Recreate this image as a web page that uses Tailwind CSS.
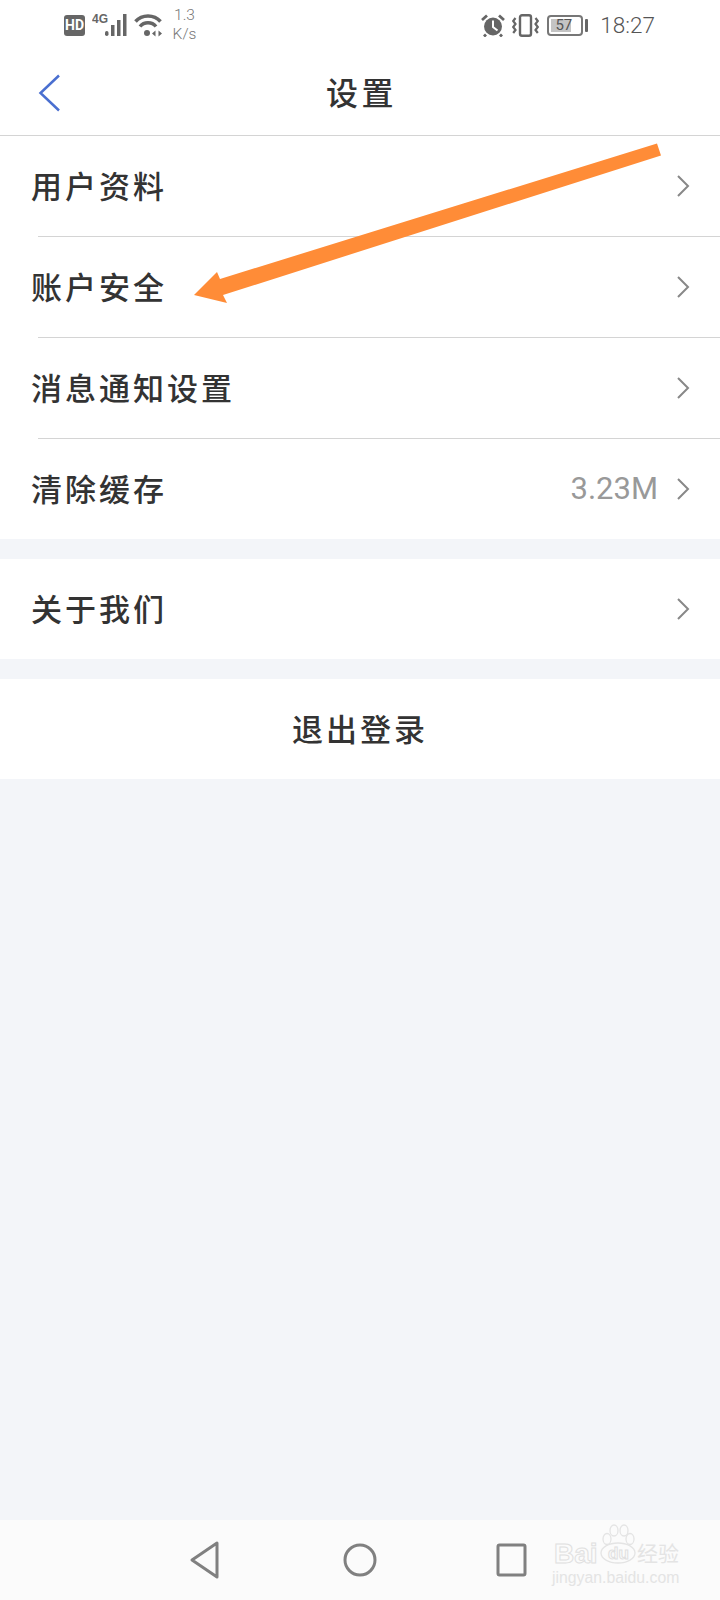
<!DOCTYPE html>
<html lang="zh">
<head>
    <meta charset="UTF-8">
    <meta name="viewport" content="width=device-width, initial-scale=1.0">
    <title>设置</title>
    <script src="https://cdn.jsdelivr.net/npm/@tailwindcss/browser@4"></script>
</head>
<body class="bg-[#f3f5f9] font-['Noto_Sans_CJK_SC',sans-serif]">
<div class="relative w-[720px] h-[1600px] flex flex-col overflow-hidden">

    <!-- Status bar -->
    <div class="h-[60px] bg-white flex items-center justify-between pb-[10px] pl-[64px] pr-[65px] text-[#666] font-['Roboto',sans-serif]">
        <div class="flex items-center">
            <div class="w-[21px] h-[21px] rounded-[3px] bg-[#666] text-white text-[14px] font-bold flex items-center justify-center">HD</div>
            <svg class="ml-[7px]" width="36" height="24" viewBox="0 0 36 24" fill="#666">
                <text x="0" y="10" font-size="12" font-weight="700" font-family="Liberation Sans">4G</text>
                <rect x="13" y="18" width="3.500" height="5" rx="1.700"/>
                <rect x="19" y="12" width="3.500" height="11"/>
                <rect x="25" y="7" width="3.500" height="16"/>
                <rect x="31" y="1" width="3.500" height="22"/>
            </svg>
            <svg class="ml-[6px]" width="28" height="24" viewBox="0 0 28 24" fill="none" stroke="#666" stroke-width="3.500">
                <path d="M1.500 8.500 C8 1 20 1 26.500 8.500"/>
                <path d="M6 13.500 C10 8.500 18 8.500 22 13.500"/>
                <circle cx="13" cy="20" r="3" fill="#666" stroke="none"/>
                <path d="M18 20.500 l3.500 -3 v6 z M28 20.500 l-3.500 -3 v6 z" fill="#666" stroke="none"/>
            </svg>
            <div class="ml-[10px] w-[25px] text-[15.500px] leading-[19px] text-center font-light text-[#777]">1.3<br>K/s</div>
        </div>
        <div class="flex items-center">
            <svg width="24" height="23" viewBox="0 0 24 23">
                <circle cx="12" cy="12.500" r="9" fill="#666"/>
                <path d="M12 6.500 V13 L16.500 16.500" fill="none" stroke="#fff" stroke-width="2"/>
                <path d="M1 6 L6 1.500 M23 6 L18 1.500 M5 20.500 L3 22.500 M19 20.500 L21 22.500" stroke="#666" stroke-width="2.800"/>
            </svg>
            <svg class="ml-[7px]" width="27" height="23" viewBox="0 0 27 23" fill="none" stroke="#666">
                <rect x="8" y="1.200" width="11" height="20.500" rx="2" stroke-width="2.400"/>
                <path d="M3.500 4 L1.200 7 L3.500 10 L1.200 13 L3.500 16 L1.200 19 M23.500 4 L25.800 7 L23.500 10 L25.800 13 L23.500 16 L25.800 19" stroke-width="2.200"/>
            </svg>
            <div class="ml-[8px] relative w-[36px] h-[21px] rounded-[4px] border-2 border-[#777] p-[2px] flex">
                <div class="w-[20px] bg-[#c4c4c4]"></div>
                <span class="absolute inset-0 text-[15px] leading-[17px] text-center text-[#555] pr-[3px]">57</span>
            </div>
            <div class="ml-[2px] w-[3px] h-[13px] rounded-[1px] bg-[#666]"></div>
            <div class="ml-[12px] text-[22.500px] leading-none font-light text-[#555]">18:27</div>
        </div>
    </div>

    <!-- Title bar -->
    <div class="relative h-[76px] bg-white border-b border-[#d4d4d4] flex items-center justify-center pb-[14px]">
        <svg class="absolute left-[38px] top-[14px]" width="24" height="38" viewBox="0 0 24 38" fill="none" stroke="#4a6fd0" stroke-width="2.500">
            <path d="M21 1.500 L2.500 19 L21 36.500"/>
        </svg>
        <h1 class="text-[32px] leading-none font-medium text-[#333] tracking-[3.500px] pl-[3px]">设置</h1>
    </div>

    <!-- Settings list -->
    <div class="bg-white">
        <div class="h-[100px] flex items-center justify-between pl-[31px] pr-[30px]">
            <span class="pb-[2px] text-[31px] font-medium text-[#333] tracking-[3px]">用户资料</span>
            <svg width="14" height="24" viewBox="0 0 14 24" fill="none" stroke="#888" stroke-width="2"><path d="M2 2 L12 12 L2 22"/></svg>
        </div>
        <div class="ml-[38px] h-px bg-[#d4d4d4]"></div>
        <div class="h-[100px] flex items-center justify-between pl-[31px] pr-[30px]">
            <span class="pb-[2px] text-[31px] font-medium text-[#333] tracking-[3px]">账户安全</span>
            <svg width="14" height="24" viewBox="0 0 14 24" fill="none" stroke="#888" stroke-width="2"><path d="M2 2 L12 12 L2 22"/></svg>
        </div>
        <div class="ml-[38px] h-px bg-[#d4d4d4]"></div>
        <div class="h-[100px] flex items-center justify-between pl-[31px] pr-[30px]">
            <span class="pb-[2px] text-[31px] font-medium text-[#333] tracking-[3px]">消息通知设置</span>
            <svg width="14" height="24" viewBox="0 0 14 24" fill="none" stroke="#888" stroke-width="2"><path d="M2 2 L12 12 L2 22"/></svg>
        </div>
        <div class="ml-[38px] h-px bg-[#d4d4d4]"></div>
        <div class="h-[100px] flex items-center justify-between pl-[31px] pr-[30px]">
            <span class="pb-[2px] text-[31px] font-medium text-[#333] tracking-[3px]">清除缓存</span>
            <div class="flex items-center">
                <span class="text-[31px] text-[#999] font-['Roboto',sans-serif] mr-[18px]">3.23M</span>
                <svg width="14" height="24" viewBox="0 0 14 24" fill="none" stroke="#888" stroke-width="2"><path d="M2 2 L12 12 L2 22"/></svg>
            </div>
        </div>
    </div>

    <div class="mt-[20px] h-[100px] bg-white flex items-center justify-between pl-[31px] pr-[30px]">
        <span class="pb-[2px] text-[31px] font-medium text-[#333] tracking-[3px]">关于我们</span>
        <svg width="14" height="24" viewBox="0 0 14 24" fill="none" stroke="#888" stroke-width="2"><path d="M2 2 L12 12 L2 22"/></svg>
    </div>

    <div class="mt-[20px] h-[100px] bg-white flex items-center justify-center">
        <span class="pb-[2px] text-[31px] font-medium text-[#333] tracking-[3px]">退出登录</span>
    </div>

    <div class="flex-1"></div>

    <!-- Android nav -->
    <div class="h-[80px] bg-[#fbfbfb] flex items-center pl-[190px]">
        <svg width="32" height="38" viewBox="0 0 32 38" fill="none" stroke="#808080" stroke-width="3" stroke-linejoin="round">
            <path d="M27 2 V36 L2 19 Z"/>
        </svg>
        <svg class="ml-[121px]" width="34" height="36" viewBox="0 0 34 36" fill="none" stroke="#808080" stroke-width="3">
            <circle cx="17" cy="18" r="15"/>
        </svg>
        <svg class="ml-[119px]" width="32" height="34" viewBox="0 0 32 34" fill="none" stroke="#808080" stroke-width="3" stroke-linejoin="round">
            <rect x="2" y="2" width="27" height="30" rx="1.500"/>
        </svg>
    </div>

    <!-- Annotation arrow -->
    <svg class="absolute left-0 top-0" width="720" height="320" viewBox="0 0 720 320">
        <polygon fill="#ff8c37" points="194,295 217,272 220,279 657,143.500 661,155.500 223,295 227,303"/>
    </svg>

    <!-- Baidu watermark -->
    <div class="absolute left-[552px] top-[1524px] w-[130px] h-[66px] text-[#e4e4e4] font-['Liberation_Sans',sans-serif]">
        <svg class="absolute left-[44px] top-0" width="44" height="42" viewBox="0 0 44 42" fill="none" stroke="#e4e4e4" stroke-width="1.300">
            <ellipse cx="11" cy="15" rx="4" ry="5.500"/>
            <ellipse cx="18" cy="6.500" rx="4" ry="5.500"/>
            <ellipse cx="28" cy="6.500" rx="4" ry="5.500"/>
            <ellipse cx="34" cy="15" rx="4" ry="5.500"/>
            <ellipse cx="22" cy="29" rx="17" ry="10"/>
        </svg>
        <span class="absolute left-[2px] top-[16px] text-[28px] leading-none font-bold text-transparent [-webkit-text-stroke:1px_#e0e0e0]">Bai</span>
        <span class="absolute left-[56px] top-[21px] text-[17px] leading-none font-bold text-transparent [-webkit-text-stroke:1px_#e0e0e0]">du</span>
        <span class="absolute left-[85px] top-[18px] text-[21px] leading-none font-['Noto_Sans_CJK_SC',sans-serif]">经验</span>
        <span class="absolute left-0 top-[46px] text-[15.800px] leading-none whitespace-nowrap">jingyan.baidu.com</span>
    </div>
</div>
</body>
</html>
